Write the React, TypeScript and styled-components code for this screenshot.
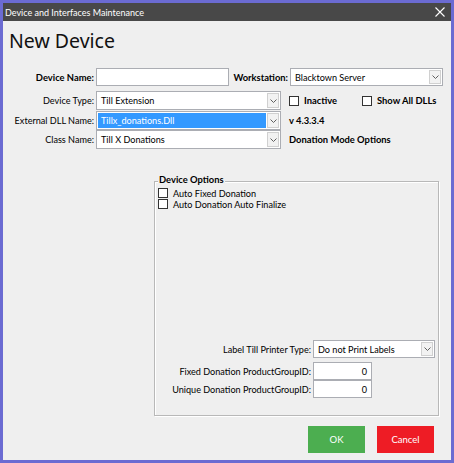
import React from "react";
import styled, { createGlobalStyle } from "styled-components";

const Global = createGlobalStyle`
  html, body { margin: 0; padding: 0; background: #6a6ad0; }
  * { box-sizing: border-box; }
  body { font-family: Lato, "Noto Sans", sans-serif; }
`;

const Window = styled.div`
  width: 454px;
  height: 463px;
  border: 3px solid #6b6bd2;
  background: #efefef;
  display: flex;
  flex-direction: column;
  overflow: hidden;
`;

const TitleBar = styled.div`
  height: 18px;
  flex: none;
  background: #484848;
  color: #ffffff;
  display: flex;
  align-items: center;
  justify-content: space-between;
  padding: 0 6px 0 2px;
  font-size: 9px;
`;

const CloseX = styled.svg`
  width: 10px;
  height: 10px;
`;

const Body = styled.div`
  flex: 1;
  display: flex;
  flex-direction: column;
  color: #000;
  font-size: 9.1px;
`;

const Heading = styled.h1`
  margin: 7px 0 0 6px;
  font-family: "Noto Sans", sans-serif;
  font-weight: 400;
  font-size: 19.5px;
  line-height: 26px;
  color: #111;
`;

const Form = styled.div`
  display: flex;
  flex-direction: column;
  margin-top: 14px;
`;

const Row = styled.div<{ $mt?: number; $h?: number }>`
  display: flex;
  align-items: center;
  height: ${(p) => p.$h ?? 19}px;
  margin-top: ${(p) => p.$mt ?? 0}px;
`;

const Label = styled.span<{ $w: number; $bold?: boolean }>`
  width: ${(p) => p.$w}px;
  flex: none;
  text-align: right;
  padding-right: 2px;
  font-weight: ${(p) => (p.$bold ? 700 : 400)};
  font-size: ${(p) => (p.$bold ? "9.4px" : "inherit")};
  white-space: nowrap;
`;

const TextBox = styled.div<{ $w: number; $h?: number; $align?: string }>`
  width: ${(p) => p.$w}px;
  height: ${(p) => p.$h ?? 19}px;
  flex: none;
  background: #fff;
  border: 1px solid #abadb3;
  padding: 0 4px;
  display: flex;
  align-items: center;
  justify-content: ${(p) => p.$align ?? "flex-start"};
`;

const SelectBox = styled.div<{ $w: number; $h: number }>`
  width: ${(p) => p.$w}px;
  height: ${(p) => p.$h}px;
  flex: none;
  background: #fff;
  border: 1px solid #abadb3;
  display: flex;
  align-items: stretch;
  padding: 1px;
`;

const SelectText = styled.span<{ $selected?: boolean }>`
  flex: 1;
  display: flex;
  align-items: center;
  padding-left: 3px;
  background: ${(p) => (p.$selected ? "#3399ff" : "transparent")};
  color: ${(p) => (p.$selected ? "#fff" : "#000")};
  white-space: nowrap;
  overflow: hidden;
`;

const DropBtn = styled.span`
  width: 12px;
  flex: none;
  margin-left: 1px;
  background: #f2f2f2;
  border: 1px solid #d0d0d0;
  display: flex;
  align-items: center;
  justify-content: center;
`;

const Chevron = () => (
  <svg width="7" height="4" viewBox="0 0 7 4">
    <path d="M0.5 0.5 L3.5 3.5 L6.5 0.5" fill="none" stroke="#606060" strokeWidth="1" />
  </svg>
);

const Select = ({ w, h = 19, value, selected }: { w: number; h?: number; value: string; selected?: boolean }) => (
  <SelectBox $w={w} $h={h}>
    <SelectText $selected={selected}>{value}</SelectText>
    <DropBtn>
      <Chevron />
    </DropBtn>
  </SelectBox>
);

const Side = styled.div<{ $ml: number }>`
  display: flex;
  align-items: center;
  margin-left: ${(p) => p.$ml}px;
  font-weight: 700;
  font-size: 9.4px;
  white-space: nowrap;
`;

const Check = styled.span`
  width: 10px;
  height: 10px;
  flex: none;
  border: 1px solid #333;
  background: #fff;
  margin-right: 5px;
`;

const CheckItem = styled.label<{ $bold?: boolean; $w?: number }>`
  display: flex;
  align-items: center;
  height: 10px;
  font-weight: ${(p) => (p.$bold ? 700 : 400)};
  width: ${(p) => (p.$w ? `${p.$w}px` : "auto")};
  white-space: nowrap;
`;

const GroupBox = styled.div`
  margin: 32px 0 0 151px;
  width: 285px;
  height: 235px;
  padding: 0 3px 17px 3px;
  border: 1px solid #b8b8b8;
  box-shadow: inset 1px 1px 0 #fff, 1px 1px 0 #fff;
  display: flex;
  flex-direction: column;
`;

const GroupTitle = styled.span`
  align-self: flex-start;
  margin-top: -8px;
  padding: 0 1px;
  background: #efefef;
  font-weight: 700;
  font-size: 9.4px;
  line-height: 12px;
`;

const Checks = styled.div`
  display: flex;
  flex-direction: column;
  gap: 1px;
  margin-top: 2px;
`;

const Options = styled.div`
  display: flex;
  flex-direction: column;
  margin-top: auto;
`;

const Buttons = styled.div`
  display: flex;
  justify-content: flex-end;
  gap: 12px;
  padding-right: 17px;
  margin-top: 10px;
`;

const Button = styled.button<{ $bg: string }>`
  width: 57px;
  height: 27px;
  border: none;
  background: ${(p) => p.$bg};
  color: #fff;
  font-family: Lato, "Noto Sans", sans-serif;
  font-size: 9.5px;
  padding: 0;
`;

export default function App() {
  return (
    <>
      <Global />
      <Window>
        <TitleBar>
          <span>Device and Interfaces Maintenance</span>
          <CloseX viewBox="0 0 10 10">
            <path d="M0.5 0.5 L9.5 9.5 M9.5 0.5 L0.5 9.5" stroke="#fff" strokeWidth="1.1" />
          </CloseX>
        </TitleBar>
        <Body>
          <Heading>New Device</Heading>
          <Form>
            <Row $h={18}>
              <Label $w={93} $bold>Device Name:</Label>
              <TextBox $w={133} $h={18} />
              <Label $w={61} $bold>Workstation:</Label>
              <Select w={153} h={18} value="Blacktown Server" />
            </Row>
            <Row $mt={5}>
              <Label $w={93}>Device Type:</Label>
              <Select w={185} value="Till Extension" />
              <Side $ml={8}>
                <CheckItem $bold $w={73}>
                  <Check />
                  Inactive
                </CheckItem>
                <CheckItem $bold>
                  <Check />
                  Show All DLLs
                </CheckItem>
              </Side>
            </Row>
            <Row $mt={1}>
              <Label $w={93}>External DLL Name:</Label>
              <Select w={185} value="Tillx_donations.Dll" selected />
              <Side $ml={8}>v 4.3.3.4</Side>
            </Row>
            <Row $mt={0}>
              <Label $w={93}>Class Name:</Label>
              <Select w={185} value="Till X Donations" />
              <Side $ml={8}>Donation Mode Options</Side>
            </Row>
          </Form>
          <GroupBox>
            <GroupTitle>Device Options</GroupTitle>
            <Checks>
              <CheckItem>
                <Check />
                Auto Fixed Donation
              </CheckItem>
              <CheckItem>
                <Check />
                Auto Donation Auto Finalize
              </CheckItem>
            </Checks>
            <Options>
              <Row $h={18}>
                <Label $w={155}>Label Till Printer Type:</Label>
                <Select w={122} h={18} value="Do not Print Labels" />
              </Row>
              <Row $mt={4} $h={18}>
                <Label $w={155}>Fixed Donation ProductGroupID:</Label>
                <TextBox $w={59} $h={18} $align="flex-end">0</TextBox>
              </Row>
              <Row $h={18}>
                <Label $w={155}>Unique Donation ProductGroupID:</Label>
                <TextBox $w={59} $h={18} $align="flex-end">0</TextBox>
              </Row>
            </Options>
          </GroupBox>
          <Buttons>
            <Button $bg="#4cae50">OK</Button>
            <Button $bg="#ee1c25">Cancel</Button>
          </Buttons>
        </Body>
      </Window>
    </>
  );
}
